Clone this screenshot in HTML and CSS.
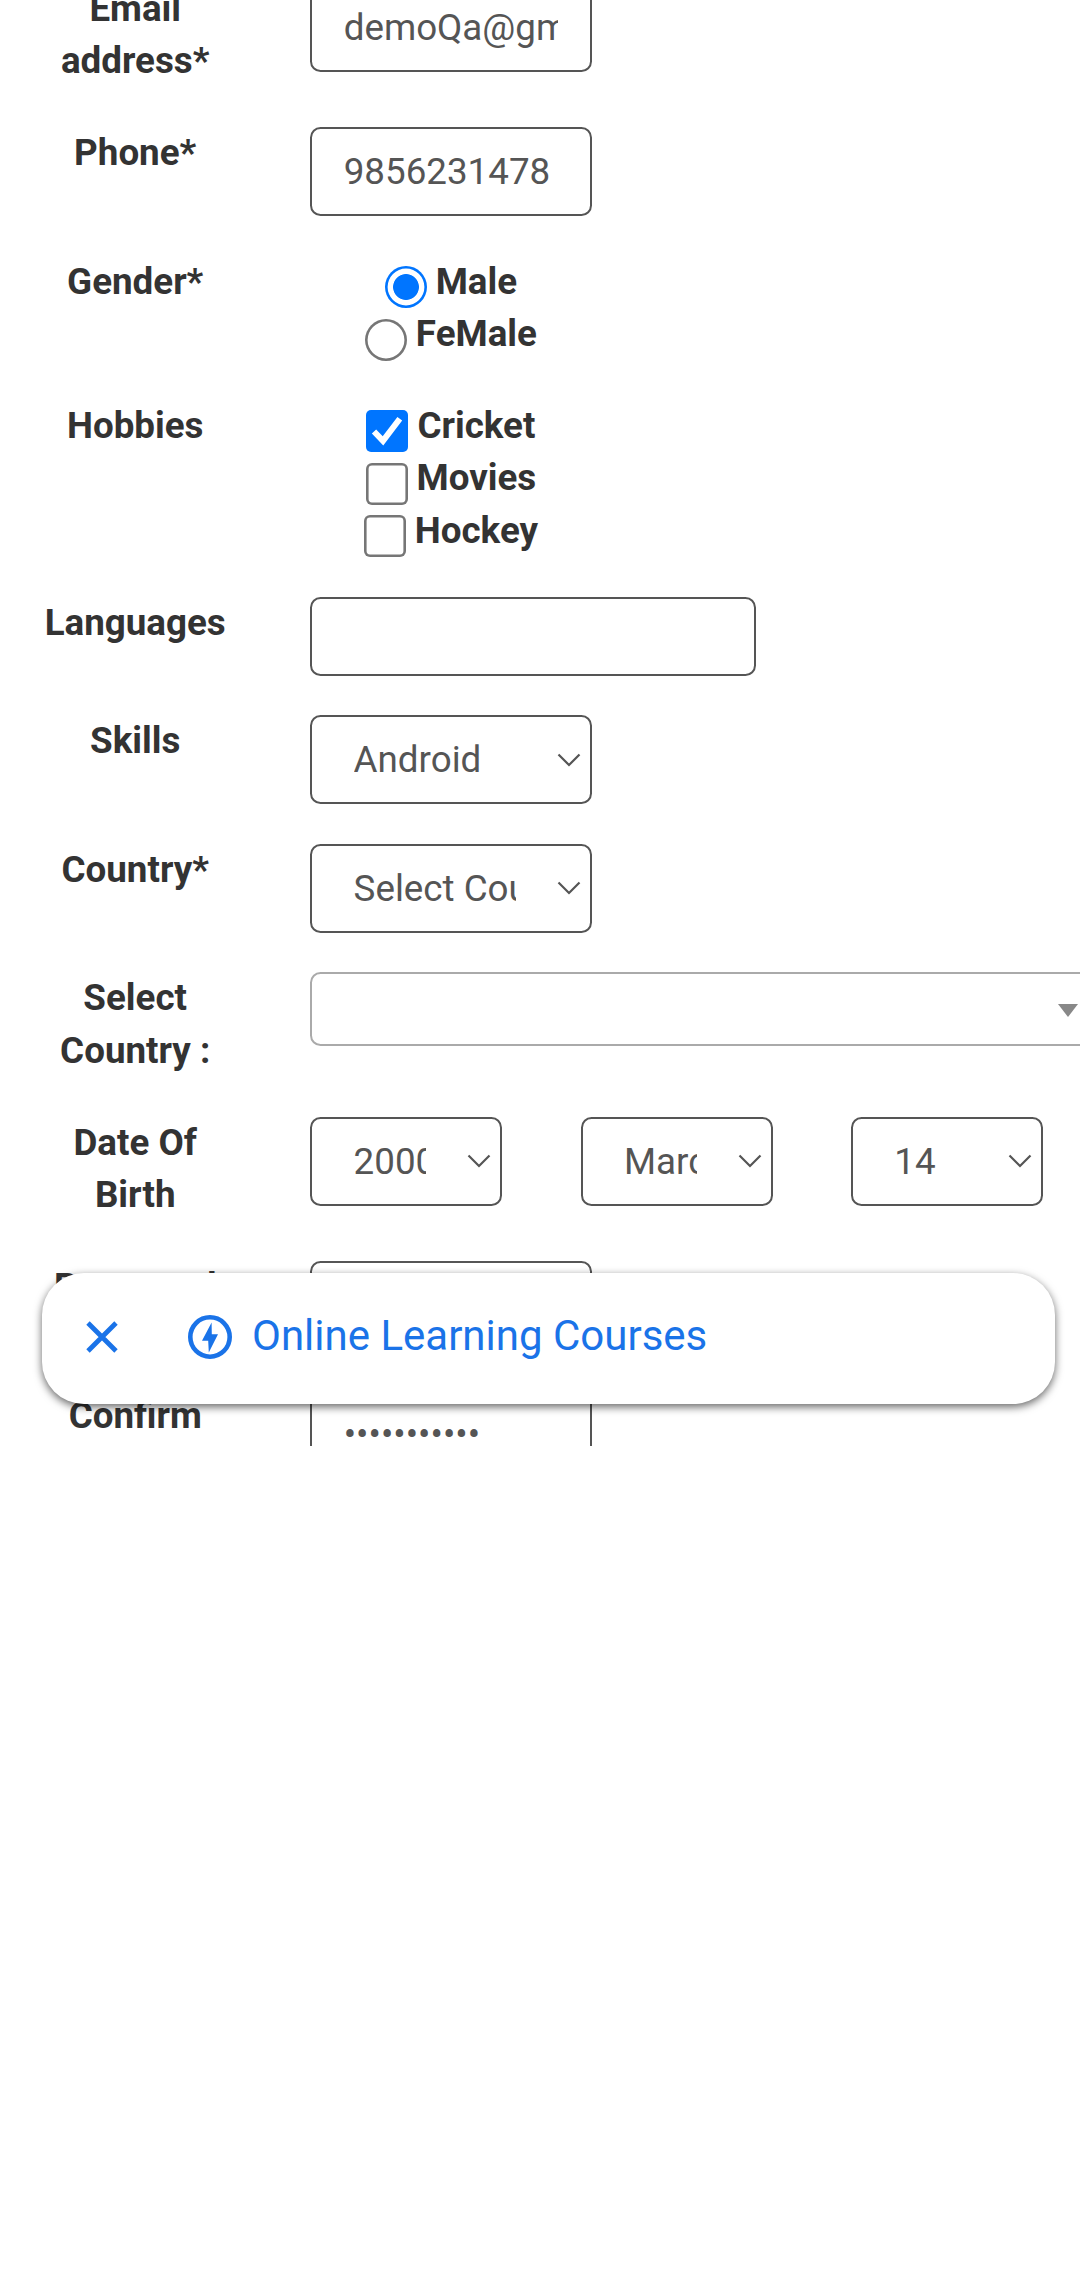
FILE: index.html
```html
<!DOCTYPE html>
<html lang="en">
<head>
<meta charset="utf-8">
<title>Register</title>
<link rel="stylesheet" href="styles.css">
</head>
<body>
<main class="viewport">
<form class="form">
  <div class="row"><div class="label">Email<br>address*</div><div class="field"><span class="value">demoQa@gmail.com</span></div></div>
  <div class="row"><div class="label">Phone*</div><div class="field"><span class="value">9856231478</span></div></div>
  <div class="row"><div class="label">Gender*</div>
    <div class="options">
      <div class="option"><span class="mark radio radio-on"></span>Male</div>
      <div class="option"><span class="mark radio"></span>FeMale</div>
    </div>
  </div>
  <div class="row"><div class="label">Hobbies</div>
    <div class="options">
      <div class="option"><svg class="mark" viewBox="0 0 42 42"><rect width="42" height="42" rx="5" fill="#0075ff"/><path d="M8 21.5L17 30.8L33.8 8.8" fill="none" stroke="#fff" stroke-width="6"/></svg>Cricket</div>
      <div class="option"><span class="mark box"></span>Movies</div>
      <div class="option"><span class="mark box"></span>Hockey</div>
    </div>
  </div>
  <div class="row"><div class="label">Languages</div><div class="field languages"></div></div>
  <div class="row"><div class="label">Skills</div><div class="field select"><span class="value">Android</span><svg class="chevron" viewBox="0 0 24 14"><path d="M1.5 1.5L12 12L22.5 1.5"/></svg></div></div>
  <div class="row"><div class="label">Country*</div><div class="field select"><span class="value">Select Country</span><svg class="chevron" viewBox="0 0 24 14"><path d="M1.5 1.5L12 12L22.5 1.5"/></svg></div></div>
  <div class="row"><div class="label">Select<br>Country :</div><div class="field combo"><span class="arrow"></span></div></div>
  <div class="row"><div class="label">Date Of<br>Birth</div>
    <div class="dates">
      <div class="field select date"><span class="value">2000</span><svg class="chevron" viewBox="0 0 24 14"><path d="M1.5 1.5L12 12L22.5 1.5"/></svg></div>
      <div class="field select date"><span class="value">March</span><svg class="chevron" viewBox="0 0 24 14"><path d="M1.5 1.5L12 12L22.5 1.5"/></svg></div>
      <div class="field select date"><span class="value">14</span><svg class="chevron" viewBox="0 0 24 14"><path d="M1.5 1.5L12 12L22.5 1.5"/></svg></div>
    </div>
  </div>
  <div class="row"><div class="label">Password</div><div class="field"></div></div>
  <div class="row"><div class="label">Confirm</div><div class="field"><span class="value">•••••••••••</span></div></div>
</form>
<aside class="banner">
  <svg class="close" viewBox="0 0 32 32"><path d="M2 2L30 30M30 2L2 30"/></svg>
  <svg class="bolt" viewBox="0 0 44 44"><circle cx="22" cy="22" r="19.7"/><path d="M23.6 7.5L14 25.7H20.2L20.8 37.5L30 19.2H23.8Z"/></svg>
  <span class="banner-text">Online Learning Courses</span>
</aside>
</main>
</body>
</html>
```
FILE: styles.css
```css
* { box-sizing: border-box; }
body { margin: 0; background: #fff; font-family: Roboto, sans-serif; font-size: 36.75px; line-height: 52.5px; color: #333; }
.viewport { position: relative; height: 1446px; overflow: hidden; }
.form { margin-top: -17.4px; display: flex; flex-direction: column; gap: 39.375px; }
.row { display: flex; align-items: flex-start; padding-left: 39.2px; }
.label { flex: none; width: 192px; margin-right: 79px; text-align: center; font-weight: 700; }
.field { flex: none; display: flex; align-items: center; width: 282px; height: 89.25px; padding: 0 32px 0 31.5px; border: 2px solid #555; border-radius: 10.5px; color: #555; background: #fff; }
.value { flex: 1; overflow: hidden; white-space: nowrap; padding-top: 2px; }
.languages { width: 446px; height: 78.75px; }
.select { padding: 0 9px 0 41.4px; }
.select .value { margin-right: 41px; }
.chevron { flex: none; width: 24px; height: 14px; fill: none; stroke: #555; stroke-width: 2.2; }
.combo { width: 800px; height: 73.5px; border-color: #aaa; padding: 3px 0 0 746px; }
.arrow { border: 10px solid transparent; border-top: 13px solid #888; border-bottom: 0; }
.dates { display: flex; gap: 78.4px; }
.date { width: 192px; }
.options { width: 281.5px; font-weight: 700; }
.option { display: flex; justify-content: center; height: 52.5px; gap: 8.9px; }
.mark { flex: none; width: 42px; height: 42px; margin-top: 10.5px; }
svg.mark { margin: 10px 1px 0 -1px; }
.radio { box-shadow: inset 0 0 0 2.6px #767676; border-radius: 50%; }
.radio-on { box-shadow: inset 0 0 0 2.6px #0075ff; background: radial-gradient(circle, #0075ff 12.5px, #fff 13.3px); }
.box { box-shadow: inset 0 0 0 2.6px #767676; border-radius: 6px; }
.banner { position: absolute; left: 42px; top: 1273px; width: 1013px; height: 131px; padding: 0 0 3px 44px; display: flex; align-items: center; background: #fff; border-radius: 42px; box-shadow: 0 3px 8px rgba(0, 0, 0, .6); color: #1a73e8; font-size: 42px; }
.close { width: 32px; height: 32px; fill: none; stroke: #1a73e8; stroke-width: 4.8; }
.bolt { width: 44px; height: 44px; margin: 0 20px 0 70px; }
.bolt circle { fill: none; stroke: #1a73e8; stroke-width: 4.6; }
.bolt path { fill: #1a73e8; }
.banner-text { padding-bottom: 1px; }
```
